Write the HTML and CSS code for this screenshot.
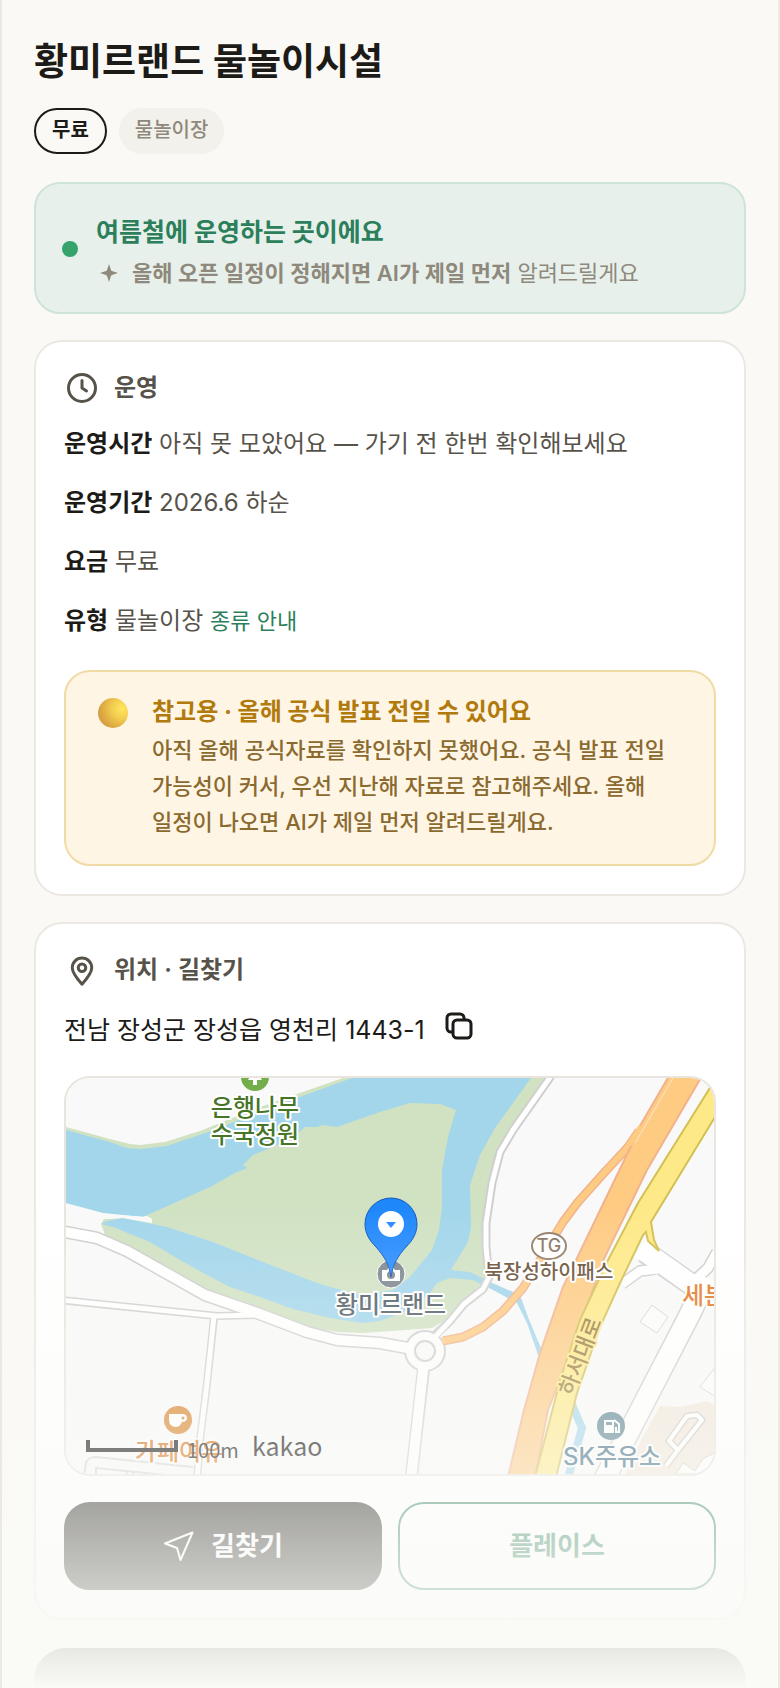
FILE: index.html
```html
<!DOCTYPE html>
<html lang="ko">
<head>
<meta charset="utf-8">
<meta name="viewport" content="width=device-width, initial-scale=1">
<title>황미르랜드 물놀이시설</title>
<link rel="stylesheet" href="styles.css">
</head>
<body>
<main class="page">
  <header class="head">
    <h1 class="title">황미르랜드 물놀이시설</h1>
    <div class="chips">
      <span class="chip chip-outline">무료</span>
      <span class="chip chip-soft">물놀이장</span>
    </div>
  </header>

  <section class="banner">
    <span class="dot"></span>
    <div class="banner-body">
      <p class="banner-title">여름철에 운영하는 곳이에요</p>
      <p class="banner-text">
        <svg class="spark" viewBox="0 0 24 24" aria-hidden="true"><path d="M12 0 L14.6 8 Q15 9 16 9.400 L24 12 L16 14.600 Q15 15 14.600 16 L12 24 L9.400 16 Q9 15 8 14.600 L0 12 L8 9.400 Q9 9 9.400 8 Z"/></svg>
        <span><strong>올해 오픈 일정이 정해지면 AI가 제일 먼저</strong> 알려드릴게요</span>
      </p>
    </div>
  </section>

  <section class="card">
    <h2 class="card-title">
      <svg class="icon" viewBox="0 0 24 24" aria-hidden="true"><circle cx="12" cy="12" r="9"/><path d="M12 7v5l3 2"/></svg>
      운영
    </h2>
    <ul class="facts">
      <li><strong>운영시간</strong> 아직 못 모았어요 — 가기 전 한번 확인해보세요</li>
      <li><strong>운영기간</strong> 2026.6 하순</li>
      <li><strong>요금</strong> 무료</li>
      <li><strong>유형</strong> 물놀이장 <a class="guide" href="#types">종류 안내</a></li>
    </ul>
    <div class="notice">
      <span class="ball"></span>
      <div class="notice-body">
        <p class="notice-title">참고용 · 올해 공식 발표 전일 수 있어요</p>
        <p class="notice-text">아직 올해 공식자료를 확인하지 못했어요. 공식 발표 전일 가능성이 커서, 우선 지난해 자료로 참고해주세요. 올해 일정이 나오면 AI가 제일 먼저 알려드릴게요.</p>
      </div>
    </div>
  </section>

  <section class="card">
    <h2 class="card-title">
      <svg class="icon" viewBox="0 0 24 24" aria-hidden="true"><path d="M12 21.500 C8 17 5.500 13.800 5.500 10.500 A6.500 6.500 0 0 1 18.500 10.500 C18.500 13.800 16 17 12 21.500 Z"/><circle cx="12" cy="10.500" r="2.500"/></svg>
      위치 · 길찾기
    </h2>
    <p class="address">
      전남 장성군 장성읍 영천리 1443-1
      <button class="copy" type="button" aria-label="주소 복사">
        <svg viewBox="0 0 28 28" aria-hidden="true"><path d="M7 20 H6 A4 4 0 0 1 2 16 V6 A4 4 0 0 1 6 2 H15 A4 4 0 0 1 19 6 V7"/><rect x="8" y="8" width="18" height="18" rx="4"/></svg>
      </button>
    </p>
    <div class="map">
      <svg class="map-canvas" viewBox="66 1078 648 396" preserveAspectRatio="xMidYMid slice" role="img" aria-label="황미르랜드 지도">
        <defs>
          <linearGradient id="pin" x1="0" y1="0" x2="0" y2="1"><stop offset="0" stop-color="#1e87fb"/><stop offset="1" stop-color="#2a8dff"/></linearGradient>
        </defs>
        <rect x="66" y="1078" width="648" height="396" fill="#f9f9f9"/>
        <polygon fill="#f1e7da" points="660,1406 680,1407 707,1401 714,1405 714,1474 625,1474 641,1440"/>
        <polygon fill="#d1e2c3" points="66,1127 110,1139 130,1144 140,1145 165,1142 200,1131 260,1107 297,1094 343,1078 547,1078 513,1127 498,1152 490,1185 485,1225 488,1262 486,1280 462,1302 449,1318 432,1328 420,1329 363,1333 337,1332 310,1328 257,1309 207,1290 153,1260 105,1235 101,1224 104,1219 123,1218 152,1223 152,1219 147,1216 105,1212 66,1203"/>
        <polygon fill="#a3d6eb" points="66,1130 110,1142 127,1148 140,1149 167,1146 217,1129 263,1110 297,1098 352,1078 531,1078 495,1128 480,1155 470,1185 471,1227 468,1242 451,1270 470,1272 490,1282 520,1295 528,1317 543,1353 538,1355 527,1323 517,1303 493,1290 473,1280 450,1278 437,1283 430,1293 410,1310 380,1321 362,1323 330,1318 293,1309 263,1298 230,1287 207,1275 180,1260 150,1242 113,1227 101,1224 107,1221 123,1218 167,1227 213,1242 263,1262 317,1283 330,1287 363,1295 393,1290 410,1277 432,1250 439,1230 442,1207 442,1170 448,1137 456,1110 440,1104 410,1103 380,1112 337,1127 323,1125 317,1127 305,1127 290,1140 253,1155 243,1165 247,1168 235,1173 210,1187 143,1217 103,1213 66,1203"/>
        <polygon fill="#f9f9f9" points="104,1214 147,1217 152,1220 152,1223 123,1218 105,1219"/>
        <path d="M570 1400 L582 1428 L568 1478" fill="none" stroke="#a3d6eb" stroke-width="8"/>

        <g fill="none" stroke="#cfcfcf" stroke-linejoin="round">
          <path stroke-width="8" d="M60 1300 L217 1316 L257 1315 M214 1318 L207 1383 L200 1440 L197 1480"/>
          <path stroke-width="13" d="M60 1231 L97 1238 L127 1251 L143 1260 L205 1295 L257 1313 L307 1332 L337 1340 L380 1343 L413 1349 M424 1365 L411 1480"/>
          <path stroke-width="9" d="M434 1336 L450 1321 L464 1304 L483 1289 L489 1277 L486 1247 L486 1223 L492 1183 L500 1152 L513 1130 L551 1076"/>
          <path stroke-width="23" d="M645 1252 L695 1287 M706 1280 L690 1314 L630 1430 L604 1480"/>
          <path stroke-width="12" d="M717 1252 L708 1268 L695 1280 M622 1284 L640 1271 L655 1269"/>
          <circle cx="425" cy="1351" r="20" fill="#fdfdfd" stroke-width="2"/>
        </g>
        <g fill="none" stroke="#ffffff" stroke-linejoin="round">
          <path stroke-width="5" d="M60 1300 L217 1316 L257 1315 M214 1316 L207 1383 L200 1440 L197 1480"/>
          <path stroke-width="10" d="M60 1231 L97 1238 L127 1251 L143 1260 L205 1295 L257 1313 L307 1332 L337 1340 L380 1343 L413 1349 M424 1362 L411 1480"/>
          <path stroke-width="5" d="M434 1338 L450 1321 L464 1304 L483 1289 L489 1277 L486 1247 L486 1223 L492 1183 L500 1152 L513 1130 L551 1076"/>
          <path stroke-width="20" d="M640 1248 L698 1289 M707 1278 L690 1314 L630 1430 L604 1480"/>
          <path stroke-width="9" d="M717 1252 L708 1268 L692 1283 M622 1284 L640 1271 L658 1269"/>
        </g>
        <circle cx="425" cy="1351" r="10" fill="#f9f9f9" stroke="#cfcfcf" stroke-width="2"/>
        <path fill="none" stroke="#d4d4d4" stroke-width="2" d="M84 1476 L86 1463 Q88 1457 96 1457 L193 1467 M96 1476 V1468 L166 1475 M127 1474 V1470 M133 1475 V1471"/>
        <path fill="#fcfcfc" stroke="#d6d3d0" d="M652 1305 L668 1317 L657 1333 L640 1322 Z M716 1366 L700 1387 L716 1397 Z"/>
        <path fill="none" stroke="#cfcac4" stroke-width="7" stroke-linejoin="round" d="M669 1441 L687 1416 L697 1415 L702 1420 L678 1450 Z M678 1450 L666 1466"/>
        <path fill="none" stroke="#ffffff" stroke-width="4" stroke-linejoin="round" d="M669 1441 L687 1416 L697 1415 L702 1420 L678 1450 Z M678 1450 L666 1466"/>
        <path fill="#ffffff" stroke="#d0ccc6" d="M683 1463 L695 1471 L703 1459 L714 1453 V1474 H676 Z"/>

        <g fill="none" stroke-linejoin="round">
          <path stroke="#f2b28c" stroke-width="9" d="M443 1341 L463 1337 L483 1327 L503 1311 L523 1288 L540 1260 L563 1222 L578 1202 L603 1174 L628 1147 L639 1131"/>
          <path stroke="#fecb83" stroke-width="6" d="M442 1341 L463 1337 L483 1327 L503 1311 L523 1288 L540 1260 L563 1222 L578 1202 L603 1174 L628 1147 L639 1131"/>
        </g>
        <polygon fill="#fecb83" stroke="#f2b28c" stroke-width="2" points="669,1076 702,1076 647,1170 613,1240 602,1263 572,1350 548,1410 535,1477 508,1477 524,1410 540,1353 563,1287 577,1258 605,1200 631,1146 637,1131"/>
        <path fill="none" stroke="#fecb83" stroke-width="5" d="M629 1145 L641 1126"/>
        <path fill="none" stroke="#fbe6cc" d="M673 1078 L635 1143"/>
        <polygon fill="#fee988" stroke="#d3c052" stroke-width="2" points="718,1075 638,1203 607,1262 580,1320 561,1377 535,1477 556,1477 577,1393 600,1327 620,1283 643,1235 646,1232 648,1241 659,1251 654,1240 651,1222 718,1112"/>

        <g class="label">
          <circle cx="255" cy="1077" r="14" fill="#74ad4c"/>
          <path d="M255 1068 L262 1080 H257 V1085 H253 V1080 H248 Z" fill="#ffffff"/>
          <text x="255" y="1116" fill="#467528">은행나무</text>
          <text x="255" y="1143" fill="#467528">수국정원</text>
          <ellipse cx="549" cy="1246" rx="17" ry="13" fill="#ffffff" stroke="#94806c" stroke-width="2"/>
          <text class="label-tg" x="549" y="1252" fill="#8a7460">TG</text>
          <text class="label-small" x="549" y="1279" fill="#684e36">북장성하이패스</text>
          <text class="label-start" x="682" y="1304" fill="#e3761f">세븐</text>
          <text class="label-road" transform="translate(580 1356) rotate(-69)" x="0" y="8" fill="#9a7c3b">하서대로</text>
          <circle cx="178" cy="1420" r="14" fill="#d67d1e"/>
          <path d="M169 1414 H182 Q187 1414 187 1418 Q187 1422 182 1422 Q180 1427 176 1427 Q169 1427 169 1420 Z" fill="#ffffff"/>
          <circle cx="183" cy="1418" r="1.500" fill="#d67d1e"/>
          <text x="179" y="1460" fill="#d46d0c">카페여유</text>
          <circle cx="611" cy="1426" r="14" fill="#56808f"/>
          <path d="M604 1420 H614 V1433 H604 Z" fill="#ffffff"/>
          <path d="M606 1422 H612 V1425 H606 Z" fill="#56808f"/>
          <path d="M614 1420 L619 1424 V1432 H616 V1427" fill="none" stroke="#ffffff" stroke-width="2"/>
          <text x="612" y="1465" fill="#32647d">SK주유소</text>
          <circle cx="391" cy="1274" r="14" fill="#7b868f" stroke="#ffffff"/>
          <path d="M382 1270 H387 L389 1267 H393 L395 1270 H400 V1281 H382 Z" fill="#ffffff"/>
          <circle cx="391" cy="1275" r="4" fill="#7b868f"/>
          <text x="391" y="1313" fill="#4c5a64">황미르랜드</text>
        </g>
        <path d="M391 1277 C389 1264 384 1256 376 1247 C369 1240 365 1233 365 1224 A26 26 0 0 1 417 1224 C417 1233 413 1240 406 1247 C398 1256 393 1264 391 1277 Z" fill="url(#pin)" stroke="#1358bd"/>
        <circle cx="391" cy="1224" r="13" fill="#ffffff"/>
        <path d="M386 1222 H396 L391 1228 Z" fill="#2a8dff"/>
        <path d="M88 1440 V1450 H176 V1440" fill="none" stroke="#000000" stroke-width="4"/>
        <text class="scale-text" x="187" y="1458">100m</text>
        <text class="brand-text" x="252" y="1456">kakao</text>
      </svg>
    </div>
    <div class="actions">
      <button class="btn btn-dark" type="button">
        <svg viewBox="0 0 32 32" aria-hidden="true"><path d="M29.500 2.500 L17.500 30 L14 18 L2 13.500 Z"/></svg>
        길찾기
      </button>
      <button class="btn btn-line" type="button">플레이스</button>
    </div>
  </section>

  <section class="next-card"></section>
  <div class="fade"></div>
</main>
</body>
</html>
```
FILE: styles.css
```css
* {
  box-sizing: border-box;
}

body {
  margin: 0;
  background: #faf9f6;
  color: #1c1b18;
  font-family: Inter, "Noto Sans CJK KR", sans-serif;
  font-size: 24px;
  line-height: 36px;
}

h1, h2, p, ul {
  margin: 0;
  padding: 0;
  font-size: inherit;
}

ul {
  list-style: none;
}

button {
  font: inherit;
  cursor: pointer;
}

.page {
  position: relative;
  display: flex;
  flex-direction: column;
  gap: 26px;
  height: 100vh;
  overflow: hidden;
  padding: 36px 32px 0;
  border: solid #ece9e1;
  border-width: 0 2px;
}

.page > * {
  flex-shrink: 0;
}

.head {
  display: grid;
  gap: 20px;
  padding-bottom: 2px;
}

.title {
  font-size: 37px;
  line-height: 52px;
  font-weight: 700;
}

.chips {
  display: flex;
  gap: 12px;
}

.chip {
  padding: 7px 16px 9px;
  border-radius: 24px;
  font-size: 20px;
  line-height: 30px;
}

.chip-outline {
  padding: 5px 16px 7px;
  border: 2px solid #1c1b18;
  font-weight: 600;
}

.chip-soft {
  background: #f2f1ec;
  color: #8e897c;
  font-weight: 500;
}

.banner {
  display: flex;
  align-items: center;
  gap: 18px;
  padding: 24px 26px 22px;
  border: 2px solid #cde4d7;
  border-radius: 26px;
  background: #e8f0eb;
}

.dot {
  width: 16px;
  height: 16px;
  border-radius: 50%;
  background: #36a36d;
}

.banner-title {
  color: #2c7f5b;
  font-size: 25px;
  line-height: 48px;
  font-weight: 700;
}

.banner-text {
  display: flex;
  align-items: center;
  gap: 14px;
  padding-left: 4px;
  color: #8e897c;
  font-size: 22px;
  line-height: 34px;
}

.banner-text strong {
  font-weight: 600;
}

.spark {
  width: 18px;
  height: 18px;
  fill: currentColor;
}

.card {
  padding: 28px;
  border: 2px solid #ebe8e1;
  border-radius: 28px;
  background: #ffffff;
}

.card-title {
  display: flex;
  align-items: center;
  gap: 14px;
  color: #57534a;
  font-weight: 600;
}

.icon {
  width: 36px;
  height: 36px;
  fill: none;
  stroke: currentColor;
  stroke-width: 2;
  stroke-linecap: round;
  stroke-linejoin: round;
}

.facts {
  display: grid;
  gap: 23px;
  margin: 20px 0 31px;
  color: #57534a;
}

.facts strong {
  color: #1c1b18;
  font-weight: 700;
}

.guide {
  color: #2c7f5b;
  font-size: 22px;
  text-decoration: none;
}

.notice {
  display: flex;
  align-items: flex-start;
  gap: 24px;
  padding: 20px 30px 24px 32px;
  border: 2px solid #f0dba6;
  border-radius: 26px;
  background: #fff5e5;
}

.ball {
  flex: none;
  width: 30px;
  height: 30px;
  margin-top: 6px;
  border-radius: 50%;
  background: radial-gradient(circle at 80% 35%, #ffe65e 0%, #f4cf50 30%, #d9a440 70%, #d98a5c 100%);
}

.notice-title {
  color: #b07a0c;
  line-height: 40px;
  font-weight: 700;
}

.notice-text {
  color: #8a6a2f;
  font-size: 22px;
  font-weight: 500;
  word-break: keep-all;
}

.address {
  display: flex;
  align-items: flex-start;
  gap: 20px;
  margin: 24px 0 28px;
  font-size: 25px;
}

.copy {
  width: 28px;
  height: 28px;
  padding: 0;
  border: 0;
  background: none;
  color: inherit;
}

.copy svg {
  display: block;
  fill: none;
  stroke: currentColor;
  stroke-width: 3;
  stroke-linecap: round;
}

.map {
  overflow: hidden;
  border: 2px solid #e9e5de;
  border-radius: 26px;
}

.map-canvas {
  display: block;
  width: 100%;
}

.label text {
  font-size: 24px;
  font-weight: 500;
  text-anchor: middle;
  paint-order: stroke;
  stroke: #ffffff;
  stroke-width: 4px;
  stroke-linejoin: round;
}

.label .label-small {
  font-size: 20px;
}

.label .label-tg {
  font-size: 18px;
  stroke: none;
}

.label .label-start {
  text-anchor: start;
}

.label .label-road {
  font-size: 22px;
  stroke: #fee988;
}

.scale-text {
  font-family: "Noto Sans CJK KR", sans-serif;
  font-size: 20px;
}

.brand-text {
  font-family: "Noto Sans CJK KR", sans-serif;
  font-size: 25px;
}

.actions {
  display: grid;
  grid-template-columns: 1fr 1fr;
  gap: 16px;
  margin-top: 26px;
}

.btn {
  display: flex;
  align-items: center;
  justify-content: center;
  gap: 16px;
  height: 88px;
  border: 2px solid #1c1b18;
  border-radius: 26px;
  font-size: 26px;
  font-weight: 700;
}

.btn svg {
  width: 32px;
  height: 32px;
  fill: none;
  stroke: currentColor;
  stroke-width: 2;
  stroke-linejoin: round;
}

.btn-dark {
  background: #1c1b18;
  color: #ffffff;
}

.btn-line {
  border-color: #2c7f5b;
  background: #ffffff;
  color: #2c7f5b;
}

.next-card {
  height: 200px;
  margin-top: 2px;
  border-radius: 32px;
  background: #1c1b18;
}

.fade {
  position: absolute;
  right: 0;
  bottom: 0;
  left: 0;
  height: 480px;
  background: linear-gradient(rgba(250, 250, 247, 0), #fafaf7);
  pointer-events: none;
}
```
